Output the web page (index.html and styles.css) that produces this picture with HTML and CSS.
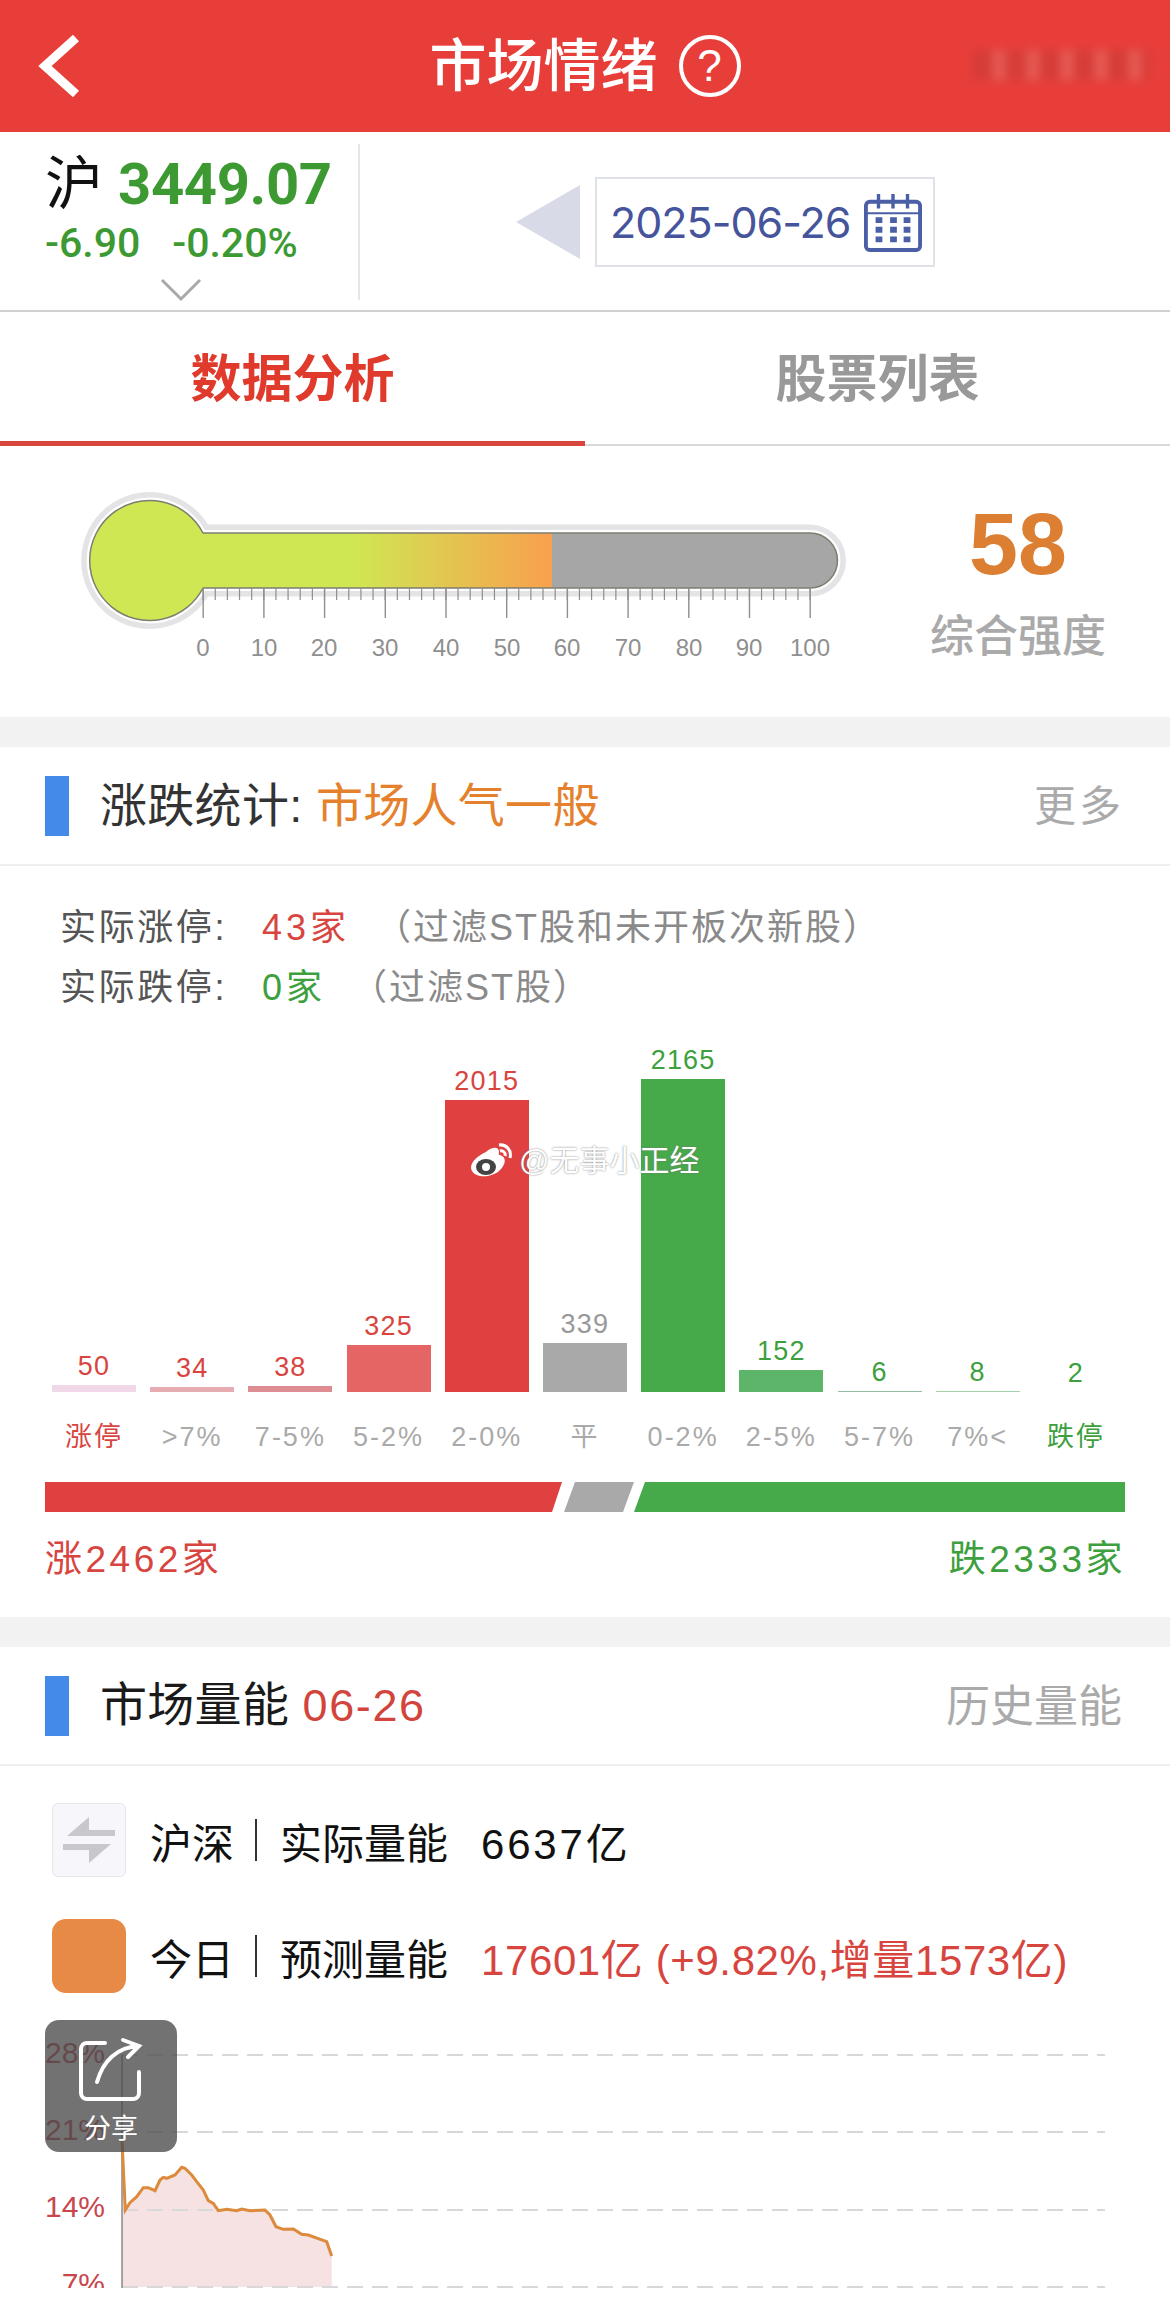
FILE: index.html
```html
<!DOCTYPE html>
<html lang="zh-CN">
<head>
    <meta charset="UTF-8">
    <meta name="viewport" content="width=device-width, initial-scale=1.0">
    <title>市场情绪</title>
    <link rel="stylesheet" href="styles.css">
</head>
<body>

    <header class="topbar">
        <svg class="back" width="90" height="132" viewBox="0 0 90 132">
            <polyline points="76,38 45,66 76,94" fill="none" stroke="#fff" stroke-width="9"/>
        </svg>
        <h1>市场情绪</h1>
        <span class="help">?</span>
        <div class="topbar-blur"></div>
    </header>

    <section class="quote">
        <div class="index">
            <div class="index-main"><span class="index-name">沪</span><span class="index-price">3449.07</span></div>
            <div class="index-change"><span>-6.90</span><span>-0.20%</span></div>
            <svg class="index-more" width="42" height="24" viewBox="0 0 42 24">
                <polyline points="2,2 21,21 40,2" fill="none" stroke="#a9a9a9" stroke-width="3"/>
            </svg>
        </div>
        <div class="date-nav">
            <div class="prev"></div>
            <div class="date-box">
                <span class="date-text">2025-06-26</span>
                <svg class="date-icon" width="58" height="60" viewBox="0 0 60 62" fill="none" stroke="#4a5fa5">
                    <rect x="2" y="10" width="56" height="50" rx="4" stroke-width="4"/>
                    <path d="M2 22H58" stroke-width="2"/>
                    <path d="M15 2V17M30 2V17M45 2V17" stroke-width="3.5"/>
                    <path d="M12 29h7M27 29h7M41 29h7M12 39h7M27 39h7M41 39h7M12 49h7M27 49h7M41 49h7" stroke-width="6"/>
                </svg>
            </div>
        </div>
    </section>

    <nav class="tabs">
        <a class="tab active">数据分析</a>
        <a class="tab">股票列表</a>
    </nav>

    <section class="strength">
        <svg class="thermo" width="800" height="230" viewBox="0 0 800 230">
            <defs>
                <linearGradient id="heat" gradientUnits="userSpaceOnUse" x1="0" y1="0" x2="767" y2="0">
                    <stop offset="0.37" stop-color="#cfe753"/>
                    <stop offset="0.6285" stop-color="#f9a04e"/>
                    <stop offset="0.6285" stop-color="#a6a6a6"/>
                </linearGradient>
            </defs>
            <path d="M133 63H740A27.5 27.5 0 0 1 740 118H133A60 60 0 1 1 133 63Z" fill="#fff" stroke="#e4e4e6" stroke-width="17"/>
            <path d="M133 63H740A27.5 27.5 0 0 1 740 118H133A60 60 0 1 1 133 63Z" fill="url(#heat)" stroke="#fff" stroke-width="6"/>
            <path d="M133 63H740A27.5 27.5 0 0 1 740 118H133A60 60 0 1 1 133 63Z" fill="url(#heat)" stroke="#7d7d72" stroke-width="1.5"/>
            <line x1="132.5" y1="124" x2="745" y2="124" stroke="#8f8f8f" stroke-width="12" stroke-dasharray="1.2 10.94"/>
            <line x1="132.5" y1="133" x2="745" y2="133" stroke="#8f8f8f" stroke-width="30" stroke-dasharray="1.4 59.3"/>
            <g class="thermo-scale">
                <text x="133" y="186">0</text>
                <text x="194" y="186">10</text>
                <text x="254" y="186">20</text>
                <text x="315" y="186">30</text>
                <text x="376" y="186">40</text>
                <text x="437" y="186">50</text>
                <text x="497" y="186">60</text>
                <text x="558" y="186">70</text>
                <text x="619" y="186">80</text>
                <text x="679" y="186">90</text>
                <text x="740" y="186">100</text>
            </g>
        </svg>
        <div class="score">
            <div class="score-num">58</div>
            <div class="score-label">综合强度</div>
        </div>
    </section>

    <div class="band"></div>

    <section class="stats">
        <div class="sec-head">
            <span class="sec-mark"></span>
            <span class="sec-title">涨跌统计: <em class="orange">市场人气一般</em></span>
            <a class="sec-more more-wide">更多</a>
        </div>
        <div class="limit-list">
            <p><span class="limit-name">实际涨停:</span><b class="limit-red">43家</b><span class="limit-note">（过滤ST股和未开板次新股）</span></p>
            <p><span class="limit-name">实际跌停:</span><b class="limit-green">0家</b><span class="limit-note">（过滤ST股）</span></p>
        </div>

        <div class="bars">
            <div class="bar-col red"><span>50</span><i style="height:7px;background:#f0d8e8"></i></div>
            <div class="bar-col red"><span>34</span><i style="height:5px;background:#e5acb2"></i></div>
            <div class="bar-col red"><span>38</span><i style="height:6px;background:#dd8c92"></i></div>
            <div class="bar-col red"><span>325</span><i style="height:47px;background:#e56565"></i></div>
            <div class="bar-col red"><span>2015</span><i style="height:292px;background:#e0403f"></i></div>
            <div class="bar-col gray"><span>339</span><i style="height:49px;background:#a9a9a9"></i></div>
            <div class="bar-col green"><span>2165</span><i style="height:313px;background:#46a94a"></i></div>
            <div class="bar-col green"><span>152</span><i style="height:22px;background:#5cb568"></i></div>
            <div class="bar-col green"><span>6</span><i style="height:1px;background:#8fbfa0"></i></div>
            <div class="bar-col green"><span>8</span><i style="height:1px;background:#a5d0ac"></i></div>
            <div class="bar-col green"><span>2</span><i style="height:0"></i></div>
        </div>
        <div class="bar-names">
            <span class="limit-red">涨停</span>
            <span>&gt;7%</span>
            <span>7-5%</span>
            <span>5-2%</span>
            <span>2-0%</span>
            <span>平</span>
            <span>0-2%</span>
            <span>2-5%</span>
            <span>5-7%</span>
            <span>7%&lt;</span>
            <span class="limit-green">跌停</span>
        </div>

        <svg class="ratio" width="1080" height="30" viewBox="0 0 1080 30">
            <polygon points="0,0 517,0 507,30 0,30" fill="#e0403f"/>
            <polygon points="530,0 589,0 578,30 519,30" fill="#a9a9a9"/>
            <polygon points="600,0 1080,0 1080,30 589,30" fill="#46a94a"/>
        </svg>
        <div class="ratio-count">
            <span class="limit-red">涨2462家</span>
            <span class="limit-green">跌2333家</span>
        </div>

        <div class="watermark">
            <svg width="44" height="36" viewBox="0 0 44 36">
                <path d="M17 9C24 3 30 4 30 9C30 11 29 12 31 12C38 14 37 22 30 28C23 34 8 36 3 28C-1 21 8 13 17 9Z" fill="#fff"/>
                <ellipse cx="17" cy="24" rx="10" ry="8" fill="#444"/>
                <ellipse cx="17" cy="24" rx="4" ry="4" fill="#fff"/>
                <path d="M30 2C37 1 43 7 41 15M31 8C34 7 37 10 36 13" fill="none" stroke="#fff" stroke-width="3"/>
            </svg>
            <span>@无事小正经</span>
        </div>
    </section>

    <div class="band"></div>

    <section class="volume">
        <div class="sec-head">
            <span class="sec-mark"></span>
            <span class="sec-title dark">市场量能 <em class="date-red">06-26</em></span>
            <a class="sec-more">历史量能</a>
        </div>
        <div class="vol-row">
            <span class="vol-icon swap">
                <svg width="52" height="46" viewBox="0 0 52 46">
                    <polygon points="26,0 26,13 52,13 52,19 4,19" fill="#c8c8cc"/>
                    <polygon points="26,46 26,33 0,33 0,27 48,27" fill="#c8c8cc"/>
                </svg>
            </span>
            <span class="vol-name">沪深</span><span class="vol-sep"></span><span class="vol-name">实际量能</span>
            <span class="vol-value wide">6637亿</span>
        </div>
        <div class="vol-row">
            <span class="vol-icon today"></span>
            <span class="vol-name">今日</span><span class="vol-sep"></span><span class="vol-name">预测量能</span>
            <span class="vol-value limit-red">17601亿 (+9.82%,增量1573亿)</span>
        </div>
        <div class="vol-chart">
            <svg width="1170" height="280" viewBox="0 0 1170 280">
                <defs>
                    <clipPath id="clip-low"><rect x="0" y="0" width="1170" height="268"/></clipPath>
                </defs>
                <polygon class="area" points="122,120 125.3,190 130,182.7 136.7,176.7 143.3,167.7 148.3,167.7 155,170.7 160,160 163.3,157.3 166.7,158.3 175,155 181.7,147.3 185,148.3 191.7,155 196.7,161.7 203.3,170 208.3,180.7 213.3,183.3 218.3,190.7 226.7,189.3 236.7,190.7 241.7,189 250,190.7 265,190 270,195 276,206.7 283.3,209.3 293.3,209 301.7,214.3 308.3,215 326.7,221.7 331.7,236 331.7,267 122,267"/>
                <path class="grid-line" d="M122 35H1105M122 112H1105M122 190H1105M122 267H1105"/>
                <line x1="122" y1="35" x2="122" y2="268" stroke="#8a8a8a" stroke-width="1.5"/>
                <polyline class="line" points="122,120 125.3,190 130,182.7 136.7,176.7 143.3,167.7 148.3,167.7 155,170.7 160,160 163.3,157.3 166.7,158.3 175,155 181.7,147.3 185,148.3 191.7,155 196.7,161.7 203.3,170 208.3,180.7 213.3,183.3 218.3,190.7 226.7,189.3 236.7,190.7 241.7,189 250,190.7 265,190 270,195 276,206.7 283.3,209.3 293.3,209 301.7,214.3 308.3,215 326.7,221.7 331.7,236"/>
                <g class="axis-label">
                    <text x="105" y="43">28%</text>
                    <text x="105" y="120">21%</text>
                    <text x="105" y="197">14%</text>
                    <text x="105" y="274" clip-path="url(#clip-low)">7%</text>
                </g>
            </svg>
            <div class="share">
                <svg width="132" height="88" viewBox="0 0 132 88" fill="none" stroke="#fff" stroke-width="4" stroke-linecap="round">
                    <path d="M60 23H42A6 6 0 0 0 36 29V73A6 6 0 0 0 42 79H88A6 6 0 0 0 94 73V52"/>
                    <path d="M52 62C58 41 72 27 94 26M78 20L94 26L83 37"/>
                </svg>
                <span>分享</span>
            </div>
        </div>
    </section>

</body>
</html>
```

FILE: styles.css
```css
* {
    margin: 0;
    padding: 0;
    box-sizing: border-box;
}

body {
    width: 1170px;
    height: 2320px;
    overflow: hidden;
    background: #fff;
    font-family: "Liberation Sans", "Noto Sans CJK SC", sans-serif;
}

em {
    font-style: normal;
}

/* top bar */
.topbar {
    height: 132px;
    background: #e83e3a;
    display: flex;
    align-items: center;
    justify-content: center;
    gap: 21px;
    color: #fff;
    position: relative;
}

.topbar h1 {
    font-size: 57px;
    font-weight: 500;
    line-height: 132px;
}

.back {
    position: absolute;
    left: 0;
    top: 0;
}

.help {
    width: 62px;
    height: 62px;
    border: 4px solid #fff;
    border-radius: 50%;
    font-size: 44px;
    line-height: 54px;
    text-align: center;
}

.topbar-blur {
    position: absolute;
    left: 972px;
    top: 50px;
    width: 178px;
    height: 30px;
    background: repeating-linear-gradient(90deg, #d03c38 0 20px, #e6625a 20px 34px);
    filter: blur(5px);
    opacity: 0.75;
}

/* index + date */
.quote {
    height: 180px;
    display: flex;
    border-bottom: 2px solid #d0d0d0;
    padding-top: 12px;
}

.index {
    width: 360px;
    height: 156px;
    border-right: 2px solid #e6e6e6;
    padding-left: 45px;
    display: flex;
    flex-direction: column;
}

.index-main {
    display: flex;
    align-items: center;
    flex-shrink: 0;
    height: 68px;
    margin-top: 6px;
}

.index-name {
    font-size: 58px;
    color: #111;
    width: 73px;
    line-height: 68px;
}

.index-price {
    font-family: Roboto, "Liberation Sans", sans-serif;
    font-size: 58px;
    font-weight: 700;
    color: #3d9a33;
    letter-spacing: -0.4px;
}

.index-change {
    display: flex;
    flex-shrink: 0;
    gap: 32px;
    font-family: Roboto, "Liberation Sans", sans-serif;
    font-size: 41px;
    font-weight: 500;
    color: #3d9a33;
    line-height: 50px;
}

.index-more {
    flex-shrink: 0;
    margin: 10px 0 0 115px;
}

.date-nav {
    display: flex;
    align-items: center;
    padding-left: 156px;
    height: 156px;
}

.prev {
    width: 0;
    height: 0;
    border-top: 37px solid transparent;
    border-bottom: 37px solid transparent;
    border-right: 64px solid #d8dbe7;
    margin-right: 15px;
}

.date-box {
    width: 340px;
    height: 90px;
    border: 2px solid #dfe1e8;
    display: flex;
    align-items: center;
    padding-left: 13px;
    font-family: Inter, "Liberation Sans", sans-serif;
    color: #46549c;
}

.date-text {
    width: 254px;
    font-size: 43px;
    letter-spacing: -1px;
    white-space: nowrap;
}

.date-icon {
    flex-shrink: 0;
}

/* tabs */
.tabs {
    height: 134px;
    display: flex;
    border-bottom: 2px solid #d9d9d9;
}

.tab {
    width: 50%;
    height: 134px;
    text-align: center;
    font-size: 51px;
    font-weight: bold;
    line-height: 136px;
    color: #999;
}

.tab.active {
    color: #e03a2d;
    border-bottom: 5px solid #d8453c;
}

/* thermometer */
.strength {
    height: 271px;
    display: flex;
    position: relative;
    padding: 24px 0 0 70px;
}

.thermo-scale text {
    font-family: "Liberation Sans", sans-serif;
    font-size: 24px;
    fill: #8f8f8f;
    text-anchor: middle;
}

.score {
    margin-left: 33px;
    width: 230px;
    text-align: center;
}

.score-num {
    font-size: 88px;
    font-weight: bold;
    line-height: 96px;
    color: #dc7f33;
    margin-top: 26px;
}

.score-label {
    font-size: 44px;
    font-weight: 500;
    line-height: 60px;
    color: #aaa;
    margin-top: 15px;
}

.band {
    height: 30px;
    background: #f2f2f2;
}

/* section head */
.sec-head {
    height: 119px;
    display: flex;
    align-items: center;
    padding: 0 48px 0 45px;
    border-bottom: 2px solid #eee;
}

.sec-mark {
    width: 24px;
    height: 60px;
    background: #448ae8;
    margin-right: 31px;
}

.sec-title {
    font-size: 47px;
    line-height: 54px;
    color: #333;
    letter-spacing: 0.3px;
}

.sec-title.dark {
    color: #1a1a1a;
}

.orange {
    color: #e5812d;
}

.date-red {
    color: #d2443c;
    font-size: 45px;
    letter-spacing: 1.6px;
}

.sec-more {
    margin-left: auto;
    font-size: 44px;
    line-height: 54px;
    padding-top: 2px;
    color: #aaa;
}

.more-wide {
    font-size: 42px;
    letter-spacing: 3px;
    margin-right: -2px;
}

/* up/down statistics */
.stats {
    height: 870px;
    position: relative;
}

.limit-list {
    padding: 32px 0 0 60px;
    height: 152px;
    font-size: 36px;
    line-height: 60px;
    letter-spacing: 2.6px;
    color: #555;
}

.limit-name {
    display: inline-block;
    width: 202px;
}

.limit-red {
    color: #d8453f;
}

.limit-green {
    color: #3d9f3d;
}

.limit-list b {
    font-weight: normal;
    letter-spacing: 4px;
}

.limit-note {
    color: #8a8a8a;
    margin-left: 25px;
    letter-spacing: 2px;
}

.bars {
    height: 374px;
    display: grid;
    grid-template-columns: repeat(11, 84px);
    column-gap: 14.2px;
    padding-left: 52px;
    align-items: end;
}

.bar-col {
    display: flex;
    flex-direction: column;
    align-items: center;
    font-size: 27px;
    line-height: 32px;
    letter-spacing: 1.2px;
}

.bar-col span {
    margin-bottom: 3px;
}

.bar-col i {
    display: block;
    width: 84px;
}

.bar-col.red { color: #d8453f; }
.bar-col.gray { color: #999; }
.bar-col.green { color: #3d9f3d; }

.bar-names {
    display: grid;
    grid-template-columns: repeat(11, 84px);
    column-gap: 14.2px;
    padding-left: 52px;
    margin-top: 25px;
    font-size: 27px;
    line-height: 40px;
    letter-spacing: 2px;
    text-align: center;
    white-space: nowrap;
    color: #aaa;
}

.ratio {
    display: block;
    margin: 25px 0 0 45px;
}

.ratio-count {
    display: flex;
    justify-content: space-between;
    padding: 0 44px 0 45px;
    margin-top: 28px;
    font-size: 37px;
    line-height: 40px;
    letter-spacing: 3.5px;
}

.watermark {
    position: absolute;
    left: 469px;
    top: 393px;
    display: flex;
    align-items: center;
    gap: 6px;
    color: #fff;
    font-size: 30px;
    line-height: 42px;
    text-shadow: 0 0 2px #777;
}

/* market volume */
.vol-row {
    display: flex;
    align-items: center;
    height: 74px;
    padding-left: 52px;
    margin-top: 37px;
    font-size: 42px;
    color: #111;
}

.vol-row + .vol-row {
    margin-top: 42px;
}

.vol-icon {
    width: 74px;
    height: 74px;
    margin-right: 24px;
    display: flex;
    align-items: center;
    justify-content: center;
}

.swap {
    background: #f7f7fb;
    border: 1px solid #e6e6ec;
    border-radius: 6px;
}

.today {
    background: #e68a45;
    border-radius: 14px;
}

.vol-sep {
    width: 2px;
    height: 42px;
    background: #333;
    margin: 0 23px 0 21px;
}

.vol-value {
    margin-left: 33px;
    letter-spacing: 0.6px;
}

.vol-value.wide {
    letter-spacing: 2.8px;
}

.vol-chart {
    height: 300px;
    margin-top: 27px;
    position: relative;
}

.area {
    fill: #f6e2e2;
}

.grid-line {
    fill: none;
    stroke: #d8d8d8;
    stroke-width: 2;
    stroke-dasharray: 16 9;
}

.line {
    fill: none;
    stroke: #dc8a3c;
    stroke-width: 3;
}

.axis-label text {
    font-family: "Liberation Sans", sans-serif;
    font-size: 30px;
    fill: #c8464e;
    text-anchor: end;
}

.share {
    position: absolute;
    left: 45px;
    top: 0;
    width: 132px;
    height: 132px;
    background: rgba(74, 74, 74, 0.78);
    border-radius: 14px;
    display: flex;
    flex-direction: column;
    align-items: center;
    color: #fff;
    font-size: 27px;
    line-height: 32px;
}

.share span {
    margin-top: 5px;
}
```
